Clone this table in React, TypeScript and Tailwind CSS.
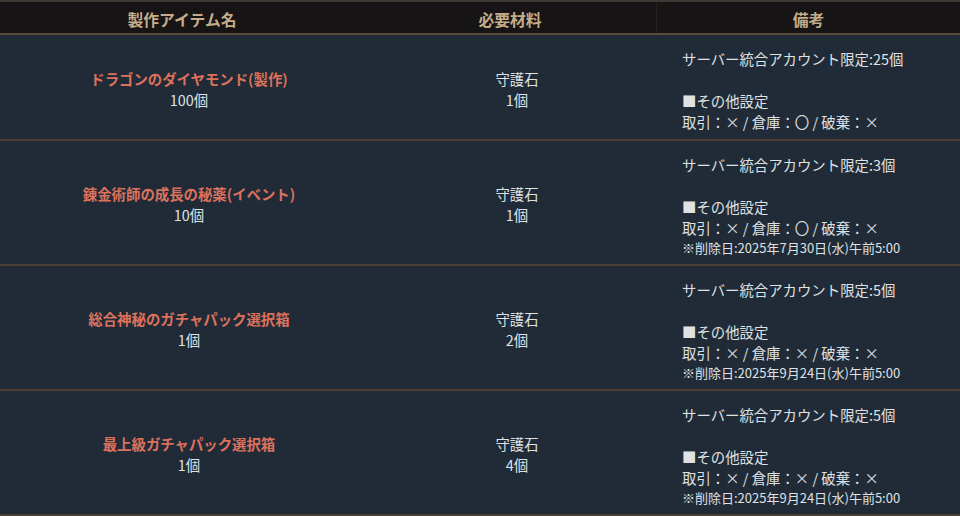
import React from "react";

type Row = {
  name: string;
  count: string;
  mat: string;
  matCount: string;
  limit: string;
  rule: string;
  del?: string;
};

const rows: Row[] = [
  {
    name: "ドラゴンのダイヤモンド(製作)",
    count: "100個",
    mat: "守護石",
    matCount: "1個",
    limit: "サーバー統合アカウント限定:25個",
    rule: "取引：× / 倉庫：〇 / 破棄：×",
  },
  {
    name: "錬金術師の成長の秘薬(イベント)",
    count: "10個",
    mat: "守護石",
    matCount: "1個",
    limit: "サーバー統合アカウント限定:3個",
    rule: "取引：× / 倉庫：〇 / 破棄：×",
    del: "※削除日:2025年7月30日(水)午前5:00",
  },
  {
    name: "総合神秘のガチャパック選択箱",
    count: "1個",
    mat: "守護石",
    matCount: "2個",
    limit: "サーバー統合アカウント限定:5個",
    rule: "取引：× / 倉庫：× / 破棄：×",
    del: "※削除日:2025年9月24日(水)午前5:00",
  },
  {
    name: "最上級ガチャパック選択箱",
    count: "1個",
    mat: "守護石",
    matCount: "4個",
    limit: "サーバー統合アカウント限定:5個",
    rule: "取引：× / 倉庫：× / 破棄：×",
    del: "※削除日:2025年9月24日(水)午前5:00",
  },
];

export default function App() {
  return (
    <div
      className="w-[960px] h-[516px] overflow-hidden bg-[#212b38] text-[14.4px] leading-[21px] text-[#dfe1e3]"
      style={{ fontFamily: '"Noto Sans CJK JP", "Noto Sans", sans-serif' }}
    >
      <div className="grid grid-cols-[364px_292px_304px] bg-[#161414] border-t-2 border-[#3d3935] border-b-2 border-b-[#5b4b39] h-[35px] text-[15.8px] font-bold text-[#c4ad8a]">
        <div className="flex items-center justify-center pt-[4px]">製作アイテム名</div>
        <div className="flex items-center justify-center pt-[4px]">必要材料</div>
        <div className="flex items-center justify-center pt-[4px] border-l border-[#24201e]">備考</div>
      </div>
      {rows.map((r, i) => (
        <div
          key={i}
          className="grid grid-cols-[378px_278px_304px] border-b-2 border-[#4a3e31]"
        >
          <div className="flex flex-col items-center justify-center text-center pt-[3px]">
            <div className="font-bold text-[#dc715c]">{r.name}</div>
            <div>{r.count}</div>
          </div>
          <div className="flex flex-col items-center justify-center text-center pt-[3px]">
            <div>{r.mat}</div>
            <div>{r.matCount}</div>
          </div>
          <div className="pl-[26px] pt-[13px] pb-[7px]">
            <div>{r.limit}</div>
            <div>&nbsp;</div>
            <div>■その他設定</div>
            <div>{r.rule}</div>
            {r.del && <div className="text-[13px] leading-[19px]">{r.del}</div>}
          </div>
        </div>
      ))}
    </div>
  );
}
